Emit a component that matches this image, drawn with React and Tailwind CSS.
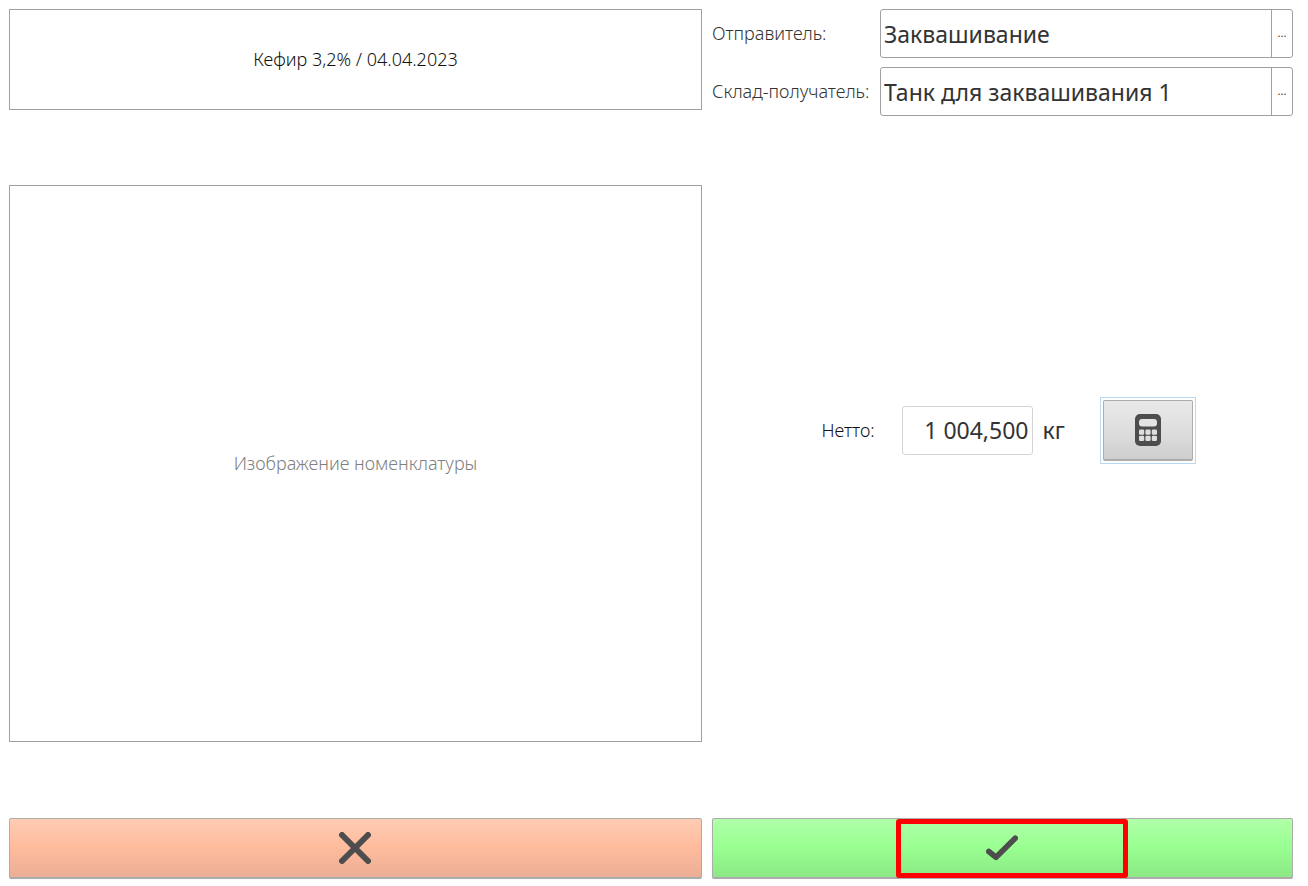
import React from "react";

function LookupField({ id, label, value }) {
  return (
    <div className="flex items-center">
      <label htmlFor={id} className="w-[168px] shrink-0 whitespace-nowrap text-[18px] font-light text-[#333]">
        {label}
      </label>
      <div className="flex h-[49px] min-w-0 flex-1 overflow-hidden rounded-[3px] border border-[#a0a0a0] bg-white">
        <input
          id={id}
          type="text"
          defaultValue={value}
          className="min-w-0 flex-1 px-[3px] pt-[2px] text-[23px] text-[#333] outline-none"
        />
        <button
          type="button"
          aria-label={`Выбрать: ${label}`}
          className="w-[21px] shrink-0 border-l border-[#a0a0a0] text-[11px] text-[#333]"
        >
          ...
        </button>
      </div>
    </div>
  );
}

function CalculatorIcon() {
  return (
    <svg width="26" height="32" viewBox="0 0 26 32" aria-hidden="true">
      <rect width="26" height="32" rx="5" fill="#4d4d4d" />
      <rect x="4" y="5" width="18" height="7.5" rx="3" fill="#e3e3e3" />
      <g fill="#dedede">
        <rect x="4" y="15.5" width="5.2" height="5.2" rx="1.3" />
        <rect x="10.4" y="15.5" width="5.2" height="5.2" rx="1.3" />
        <rect x="16.8" y="15.5" width="5.2" height="5.2" rx="1.3" />
        <rect x="4" y="21.8" width="5.2" height="5.2" rx="1.3" />
        <rect x="10.4" y="21.8" width="5.2" height="5.2" rx="1.3" />
        <rect x="16.8" y="21.8" width="5.2" height="5.2" rx="1.3" />
      </g>
    </svg>
  );
}

function CrossIcon() {
  return (
    <svg width="32" height="32" viewBox="0 0 32 32" aria-hidden="true">
      <path d="M3 3L29 29M29 3L3 29" stroke="#4d4d4d" strokeWidth="6" strokeLinecap="round" fill="none" />
    </svg>
  );
}

function CheckIcon() {
  return (
    <svg width="32" height="26" viewBox="0 0 32 26" aria-hidden="true">
      <path
        d="M2.8 16.5L10 22.3L29.2 3.2"
        stroke="#4d4d4d"
        strokeWidth="5.6"
        strokeLinecap="round"
        strokeLinejoin="round"
        fill="none"
      />
    </svg>
  );
}

export default function App() {
  return (
    <div className="flex min-h-screen flex-col gap-[76px] bg-white pt-[9px] pr-[15px] pb-[7px] pl-[9px] font-['Noto_Sans','Open_Sans',sans-serif] text-[#333]">
      <main className="grid flex-1 grid-cols-[693fr_581fr] gap-[10px]">
        <section className="flex flex-col gap-[75px]">
          <h1 className="flex h-[101px] items-center justify-center border border-[#a0a0a0] text-[18px] font-light text-[#111]">
            Кефир 3,2% / 04.04.2023
          </h1>
          <div className="flex flex-1 items-center justify-center border border-[#a0a0a0] text-[18px] font-light text-[#808080]">
            Изображение номенклатуры
          </div>
        </section>
        <section className="flex flex-col">
          <div className="flex flex-col gap-[9px]">
            <LookupField id="sender" label="Отправитель:" value="Заквашивание" />
            <LookupField id="receiver" label="Склад-получатель:" value="Танк для заквашивания 1" />
          </div>
          <div className="flex flex-1 items-center justify-center pt-[2px] pl-[12px]">
            <label htmlFor="net" className="w-[80px] text-[18px] font-light text-[#111]">
              Нетто:
            </label>
            <input
              id="net"
              type="text"
              defaultValue="1 004,500"
              className="h-[49px] w-[131px] rounded-[3px] border border-[#d4d4d4] px-[3px] text-right text-[23px] outline-none"
            />
            <span className="w-[67px] pl-[10px] text-[23px]">кг</span>
            <div className="border border-[#b9d9f3] p-[2px]">
              <button
                type="button"
                aria-label="Калькулятор"
                className="flex h-[61px] w-[90px] items-center justify-center rounded-[2px] border border-b-2 border-[#acacac] bg-linear-to-b from-[#e9e9e9] via-[#dedede] to-[#cecece]"
              >
                <CalculatorIcon />
              </button>
            </div>
          </div>
        </section>
      </main>
      <footer className="grid grid-cols-[693fr_581fr] gap-[10px]">
        <button
          type="button"
          aria-label="Отмена"
          className="flex h-[61px] items-center justify-center rounded-[2px] border border-b-2 border-[#acacac] bg-linear-to-b from-[#ffccb4] via-[#ffbb9c] to-[#eaae96] pr-[2px]"
        >
          <CrossIcon />
        </button>
        <button
          type="button"
          aria-label="Подтвердить"
          className="relative flex h-[61px] items-center justify-center rounded-[2px] border border-b-2 border-[#acacac] bg-linear-to-b from-[#b0ffa8] via-[#98ff90] to-[#8ce884] pr-[2px]"
        >
          <CheckIcon />
          <span className="absolute top-0 left-[183px] h-[59px] w-[232px] rounded-[3px] border-[5px] border-[#ff0000]" />
        </button>
      </footer>
    </div>
  );
}
